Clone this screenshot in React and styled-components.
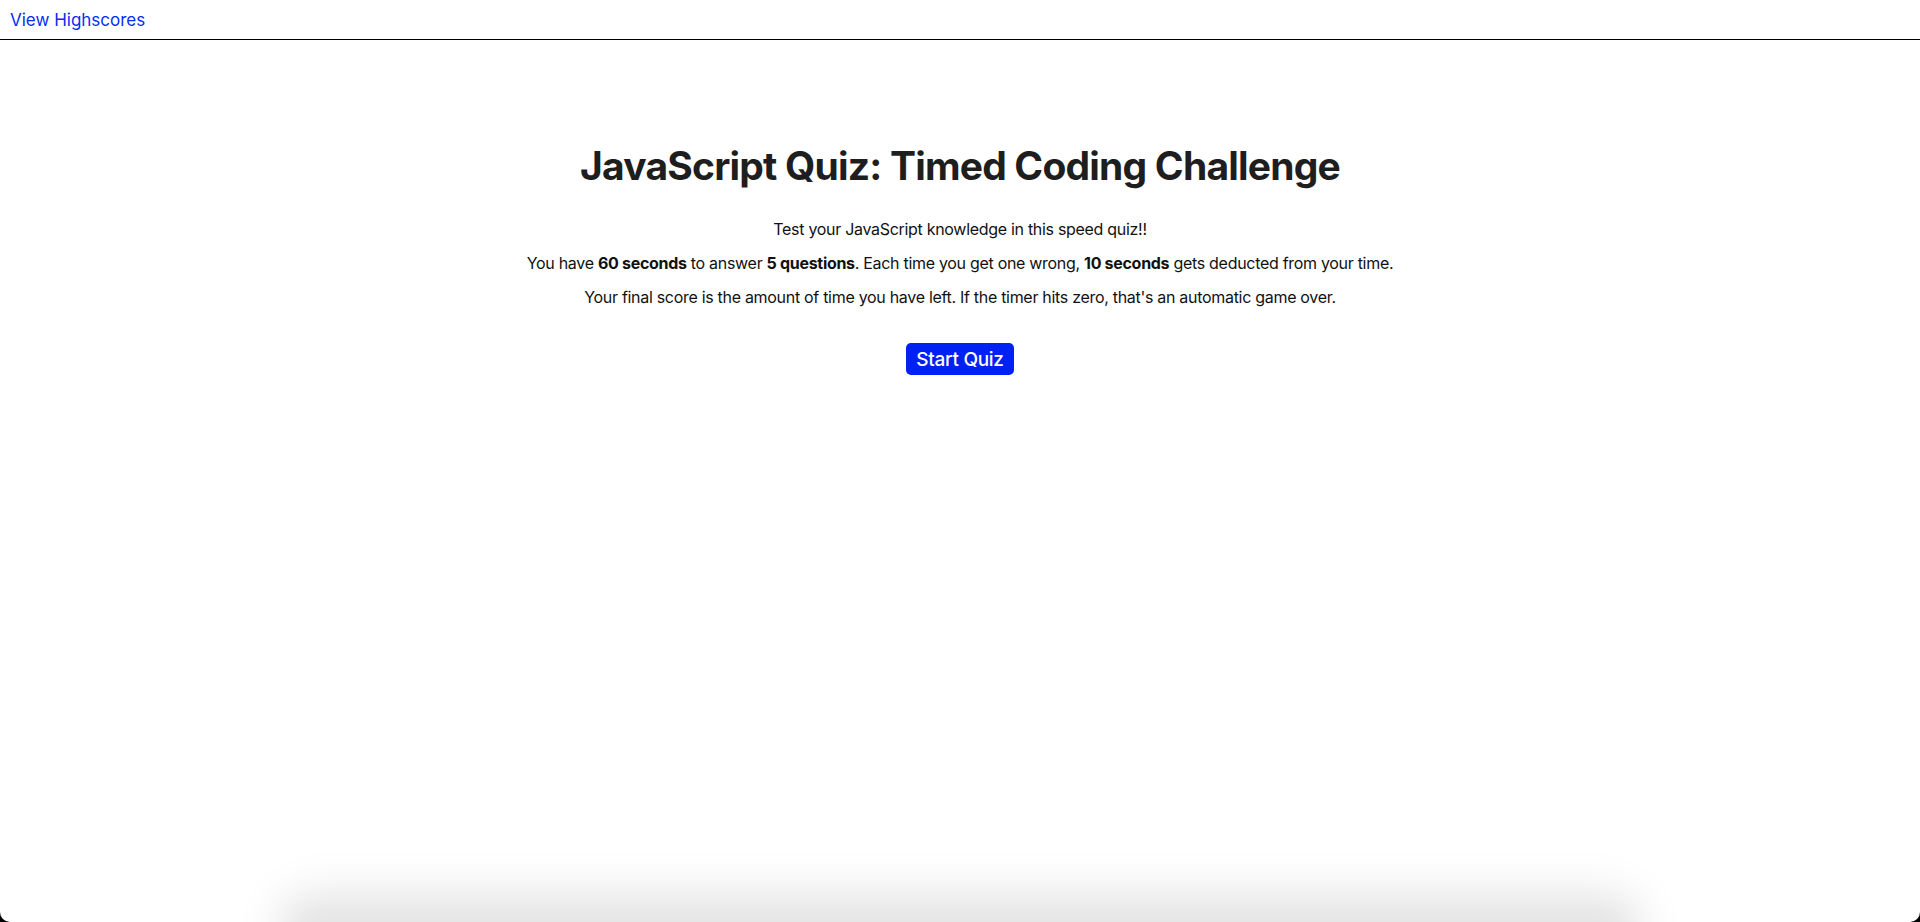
import React from "react";
import styled, { createGlobalStyle } from "styled-components";

const Global = createGlobalStyle`
  html, body { margin: 0; padding: 0; background: #000; }
  body { font-family: Inter, "Noto Sans", sans-serif; color: #111; }
`;

const Page = styled.div`
  position: relative;
  height: 922px;
  overflow: hidden;
  background: #fff;
  border-radius: 0 0 10px 10px;
`;

const Header = styled.header`
  display: flex;
  align-items: center;
  height: 39px;
  padding: 0 10px;
  border-bottom: 1px solid #000;
`;

const NavLink = styled.a`
  color: #0a2cf5;
  font-size: 17px;
  text-decoration: none;
  cursor: pointer;
`;

const Main = styled.main`
  display: flex;
  flex-direction: column;
  align-items: center;
  padding-top: 102px;
  text-align: center;
`;

const Title = styled.h1`
  margin: 0 0 31px;
  font-size: 39px;
  font-weight: 700;
  color: #1e1e1e;
  letter-spacing: -0.8px;
`;

const Para = styled.p`
  margin: 0 0 15px;
  font-size: 16px;
  line-height: 19px;
  letter-spacing: -0.3px;
  color: #111;
`;

const Button = styled.button`
  margin-top: 21px;
  background: #0021f3;
  color: #fff;
  border: none;
  border-radius: 5px;
  font-family: Inter, "Noto Sans", sans-serif;
  font-size: 19px;
  font-weight: 500;
  letter-spacing: -0.3px;
  padding: 4px 10px;
  height: 32px;
  cursor: pointer;
`;

const Shadow = styled.div`
  position: absolute;
  left: 290px;
  right: 290px;
  bottom: -30px;
  height: 40px;
  border-radius: 20px;
  box-shadow: 0 -6px 40px 10px rgba(0, 0, 0, 0.12);
  background: rgba(0, 0, 0, 0.1);
  filter: blur(12px);
  pointer-events: none;
`;

export default function App() {
  return (
    <Page>
      <Global />
      <Header>
        <NavLink>View Highscores</NavLink>
      </Header>
      <Main>
        <Title>JavaScript Quiz: Timed Coding Challenge</Title>
        <Para>Test your JavaScript knowledge in this speed quiz!!</Para>
        <Para>
          You have <b>60 seconds</b> to answer <b>5 questions</b>. Each time you get one wrong,{" "}
          <b>10 seconds</b> gets deducted from your time.
        </Para>
        <Para>
          Your final score is the amount of time you have left. If the timer hits zero, that's an
          automatic game over.
        </Para>
        <Button>Start Quiz</Button>
      </Main>
      <Shadow />
    </Page>
  );
}
